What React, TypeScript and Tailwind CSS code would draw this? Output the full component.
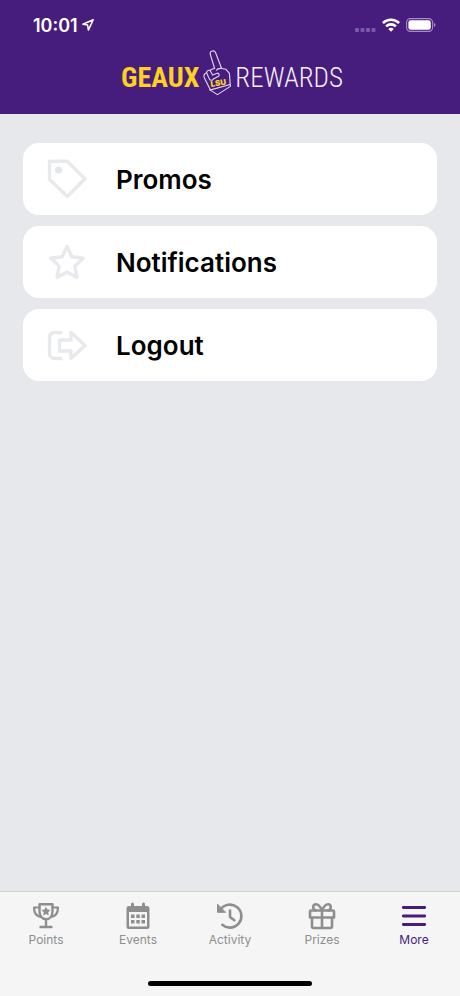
import type { ReactNode } from "react";

function StatusBar() {
  return (
    <div className="flex h-[50px] items-center justify-between pl-[33px] pr-6 text-white">
      <div className="flex items-center gap-1">
        <span className="pt-0.5 text-lg leading-6 font-semibold">10:01</span>
        <svg className="size-3" viewBox="0 0 12 12" fill="none" stroke="currentColor" strokeWidth="1.5" strokeLinejoin="round" aria-hidden="true">
          <path d="M11.2 .8 .9 5.3l4.7.8.8 5z" />
        </svg>
      </div>
      <div className="flex items-center gap-1.5">
        <svg className="h-4 w-[22px]" viewBox="0 0 22 16" fill="#7a59a8" aria-hidden="true">
          <rect x="1" y="11" width="4" height="4" rx="1" />
          <rect x="6.5" y="11" width="4" height="4" rx="1" />
          <rect x="12" y="11" width="4" height="4" rx="1" />
          <rect x="17.5" y="11" width="4" height="4" rx="1" />
        </svg>
        <svg className="h-4 w-[18px]" viewBox="0 0 18 16" fill="none" stroke="currentColor" strokeWidth="2.6" aria-hidden="true">
          <path d="M.9 6.1a11.6 11.6 0 0 1 16.2 0" />
          <path d="M4.1 9.4a7 7 0 0 1 9.8 0" />
          <path d="M9 14.7 6.3 12a3.8 3.8 0 0 1 5.4 0z" fill="currentColor" stroke="none" />
        </svg>
        <svg className="h-4 w-[30px]" viewBox="0 0 30 16" aria-hidden="true">
          <rect x=".6" y="1.6" width="26" height="12.8" rx="3.8" fill="none" stroke="#a48cc6" strokeWidth="1.1" />
          <rect x="2.4" y="3.3" width="22.4" height="9.4" rx="2.2" fill="#fff" />
          <path d="M28 5.8q3 2.2 0 4.4z" fill="#a48cc6" />
        </svg>
      </div>
    </div>
  );
}

function FoamFinger() {
  return (
    <svg className="h-[46px] w-7 shrink-0" viewBox="0 0 28 46" fill="none" stroke="#e4d8f2" strokeWidth="1.1" strokeLinejoin="round" strokeLinecap="round" role="img" aria-label="LSU foam finger">
      <path d="M11.6 18.5 7.2 4C6.6 .9 11.2 -.4 12.6 2.7L18.6 18.5l4.2.7 3.6 4.2 1 13-13 8.2-7-4.5L1.2 27.4c-.8-2.5.4-4 2.4-4.7.2-2 1.5-2.8 3.4-2.4 1.200-1 2.800-1.800 4.600-1.800Z" />
      <path d="m7 20.300 2.600 4.800 4-1.700c2-1 3.600 1.700 1.800 2.800l-5 2.700M3.600 22.700l2.800 6.400c1 1.800 3.100 1.500 4-.2M18.600 18.500c-2-.3-3.700 0-5.300 1.600M6.900 40.100 27 34.500" />
      <text x="8" y="37" transform="rotate(-9 8 37)" fill="#fdd023" stroke="none" fontSize="8" fontWeight="900" fontFamily="Inter, sans-serif">LSU</text>
    </svg>
  );
}

function Logo() {
  return (
    <h1 className="flex h-16 items-start justify-center gap-1 pl-1 font-['Roboto_Condensed','Liberation_Sans_Narrow','Roboto',sans-serif] leading-8">
      <span className="mt-3 text-[28px] font-bold text-[#fdd023]">GEAUX</span>
      <FoamFinger />
      <span className="mt-3 text-[27px] font-light text-[#f6effc]">REWARDS</span>
    </h1>
  );
}

function MenuCard({ label, children }: { label: string; children: ReactNode }) {
  return (
    <li>
      <button type="button" className="flex h-18 w-full items-center gap-[29px] rounded-2xl bg-white pl-6 text-left">
        <svg className="size-10 shrink-0" viewBox="0 0 40 40" fill="none" stroke="#e7e9ec" strokeWidth="3.4" strokeLinejoin="round" strokeLinecap="round" aria-hidden="true">
          {children}
        </svg>
        <span className="pt-0.5 text-[26px] leading-8 font-semibold text-black">{label}</span>
      </button>
    </li>
  );
}

function Tab({ label, active = false, children }: { label: string; active?: boolean; children: ReactNode }) {
  return (
    <button
      type="button"
      aria-current={active ? "page" : undefined}
      className={`flex flex-1 flex-col items-center gap-0.5 ${active ? "text-[#461d7c]" : "text-[#8e8e8f]"}`}
    >
      <svg className="size-7" viewBox="0 0 28 28" fill="none" stroke="currentColor" strokeWidth="2.6" strokeLinejoin="round" strokeLinecap="round" aria-hidden="true">
        {children}
      </svg>
      <span className="text-xs leading-4">{label}</span>
    </button>
  );
}

export default function App() {
  return (
    <div className="flex min-h-screen flex-col bg-[#e7e8ec] font-['Inter','Liberation_Sans',sans-serif]">
      <header className="bg-[#461d7c]">
        <StatusBar />
        <Logo />
      </header>

      <main className="flex-1 px-[23px] pt-[29px]">
        <ul className="flex flex-col gap-[11px]">
          <MenuCard label="Promos">
            <path d="M2.5 2.2H20L38 19.8 20.3 37.5 2.5 20.2z" />
            <circle cx="11.5" cy="11" r="3.6" fill="#e2e7ea" stroke="none" />
          </MenuCard>
          <MenuCard label="Notifications">
            <path d="m20 4.5 4.9 10.2 11.2 1.5-8.2 7.9 2 11.3L20 30l-9.9 5.4 2-11.3-8.2-7.9 11.2-1.5z" />
          </MenuCard>
          <MenuCard label="Logout">
            <path d="M14 7.5H8q-5.5 0-5.5 5.5v15q0 5.5 5.5 5.5h6" />
            <path d="M12.5 15H24V7.5L38 20.5 24 33.5v-7.5H12.5z" />
          </MenuCard>
        </ul>
      </main>

      <footer className="border-t border-[#cfcfd1] bg-[#f5f5f5]">
        <nav className="flex pt-2.5">
          <Tab label="Points">
            <path d="M7.5 2.3h13v7.2c0 4.4-2.6 7.8-6.5 7.8s-6.5-3.4-6.5-7.8zM14 17.5v7.2M8.5 25h11" strokeWidth="2.4" />
            <path d="M7.5 5.5H2c0 5.3 2.3 8.7 6.8 9.3M20.5 5.5H26c0 5.3-2.3 8.7-6.8 9.3" strokeWidth="2.2" />
            <path d="m14 4.8 1.4 2.8 3.1.5-2.3 2.2.6 3.1-2.8-1.5-2.8 1.5.6-3.1-2.3-2.2 3.1-.5z" fill="currentColor" stroke="none" />
          </Tab>
          <Tab label="Events">
            <path d="M5 4h18a2.5 2.5 0 0 1 2.5 2.5v18A2.5 2.5 0 0 1 23 27H5a2.5 2.5 0 0 1-2.5-2.5v-18A2.5 2.5 0 0 1 5 4zm0 6v14.5h18V10z" fill="currentColor" fillRule="evenodd" stroke="none" />
            <path d="M8.5 2v3M19.5 2v3" strokeWidth="3" />
            <path d="M7 12.5h3.5V16H7zm5.3 0h3.5V16h-3.5zm5.2 0H21V16h-3.500zM7 18h3.500v3.500H7zm5.300 0h3.500v3.500h-3.500zm5.200 0H21v3.500h-3.500z" fill="currentColor" stroke="none" />
          </Tab>
          <Tab label="Activity">
            <path d="M4.5 7.5a11.5 11.5 0 1 1 1.8 15.3" />
            <path d="M1.5 2.5v7.8h7.8z" fill="currentColor" strokeWidth="1" />
            <path d="M14 8.5V15l4.3 3.3" />
          </Tab>
          <Tab label="Prizes">
            <path d="M3 8.5h22q1 0 1 1v6H2v-6q0-1 1-1zM4 15.5v9Q4 26 5.5 26h17q1.500 0 1.500-1.500v-9" />
            <path d="M14 8.500V26M14 8.500C12 4 10 2 7.500 2.300 4.500 2.700 4.500 7 7.500 8.500M14 8.500C16 4 18 2 20.500 2.300c3 .4 3 4.700 0 6.200" />
          </Tab>
          <Tab label="More" active>
            <path d="M3.300 5.500h21.400M3.300 14h21.400M3.300 22.500h21.400" strokeWidth="2.800" />
          </Tab>
        </nav>
        <div className="mx-auto mt-[33px] mb-2.5 h-[5px] w-[164px] rounded-full bg-black" />
      </footer>
    </div>
  );
}
